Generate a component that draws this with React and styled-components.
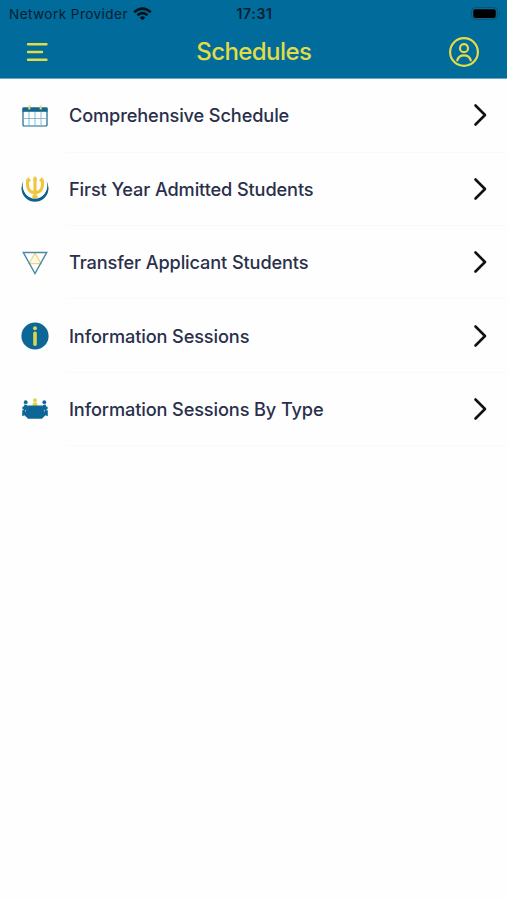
import React from "react";
import styled, { createGlobalStyle } from "styled-components";

const GlobalStyle = createGlobalStyle`
  body {
    margin: 0;
    background: #fefefe;
    font-family: Inter, "Liberation Sans", sans-serif;
  }
`;

const Screen = styled.div`
  width: 507px;
  height: 900px;
  overflow: hidden;
`;

const Header = styled.header`
  height: 79px;
  box-sizing: border-box;
  background: #016b9b;
  border-bottom: 1px solid #65a9c8;
`;

const StatusBar = styled.div`
  display: grid;
  grid-template-columns: 1fr auto 1fr;
  align-items: center;
  height: 27px;
  padding: 0 6px 0 8px;
  color: #04202f;
`;

const Carrier = styled.div`
  display: flex;
  align-items: center;
  gap: 5px;
  padding-left: 1px;
  font-size: 13.5px;
  letter-spacing: 0.47px;
  white-space: nowrap;
`;

const Time = styled.div`
  font-size: 14px;
  font-weight: 600;
  letter-spacing: 0.65px;
`;

const Battery = styled.svg`
  justify-self: end;
`;

const NavBar = styled.div`
  display: grid;
  grid-template-columns: 1fr auto 1fr;
  align-items: center;
  height: 50px;
  padding: 0 27px 0 26px;
  color: #e2dc45;
`;

const Title = styled.h1`
  margin: 0;
  padding-left: 1.5px;
  font-size: 24px;
  line-height: 30px;
  font-weight: 500;
  letter-spacing: -0.58px;
`;

const NavButton = styled.button`
  display: flex;
  justify-self: ${props => props.$side};
  padding: 0;
  border: 0;
  background: none;
  color: inherit;
`;

const List = styled.ul`
  margin: 0;
  padding: 0.3px 0 0;
  list-style: none;
`;

const Row = styled.li`
  display: flex;
  align-items: center;
  height: 73.35px;
  padding-left: 20px;
`;

const RowIcon = styled.svg`
  flex: none;
  width: 30px;
  height: 30px;
`;

const RowBody = styled.div`
  display: flex;
  flex: 1;
  align-items: center;
  justify-content: space-between;
  height: 100%;
  box-sizing: border-box;
  margin-left: 15px;
  padding: 0 19px 0 4px;
  border-bottom: 1px solid #fafafa;
`;

const Label = styled.span`
  color: #2a304b;
  font-size: 18.2px;
  font-weight: 500;
  letter-spacing: -0.13px;
  white-space: nowrap;
`;

const Wifi = () => (
  <svg width="19" height="14" viewBox="0 0 19 14" fill="none" stroke="#04131c" strokeWidth="2.5">
    <path d="M1.2 5.2Q9.5 -2 17.8 5.2" />
    <path d="M4.4 8.3Q9.5 4 14.6 8.3" />
    <path d="M6.7 10.4Q9.5 8.2 12.3 10.4L9.5 13.2Z" fill="#04131c" stroke="none" />
  </svg>
);

const CalendarIcon = () => (
  <RowIcon viewBox="0 0 30 30">
    <rect x="3" y="7" width="24" height="18" rx="1" fill="#fbfeff" stroke="#16678f" strokeWidth="1.2" />
    <path d="M2.5 6.5h25v4.3h-25z" fill="#16678f" />
    <path d="M9 11v14M15 11v14M21 11v14M3 17.5h24" stroke="#83b4ca" strokeWidth="0.9" />
    <path d="M9.3 4.6v4M20.7 4.6v4" stroke="#e2dc68" strokeWidth="2" />
  </RowIcon>
);

const TridentIcon = () => (
  <RowIcon viewBox="0 0 30 30" fill="none">
    <path d="M3.6 7A13.5 13.5 0 1 0 26.4 7A12.3 12.3 0 1 1 3.6 7Z" fill="#0e618a" />
    <circle cx="15" cy="13" r="11.6" fill="#fefefe" />
    <path d="M15 3.5V24M8.2 5C6.4 11 7.4 18.6 15 18.6S23.6 11 21.8 5" stroke="#f2c53e" strokeWidth="3.1" />
    <path d="M12.6 6.5 15 1.8l2.4 4.7zM5.8 8l2.4-5L11.2 7zM18.8 7l3-4 2.4 5zM12.3 21.5h5.4V24.3h-5.4z" fill="#f2c53e" />
  </RowIcon>
);

const TriangleIcon = () => (
  <RowIcon viewBox="0 0 30 30" fill="none">
    <path d="M9 15.7 15 5l6 10.7Z" fill="#fffae6" stroke="#eed68b" strokeWidth="1.3" />
    <path d="M3.3 4.5h23.4L15 25.5Z" stroke="#4e88a3" strokeWidth="1.4" />
  </RowIcon>
);

const InfoIcon = () => (
  <RowIcon viewBox="0 0 30 30">
    <circle cx="15" cy="15" r="13.6" fill="#0c6796" />
    <circle cx="15" cy="7.2" r="2" fill="#d8d653" />
    <path d="M15 12.2v11" stroke="#d8d653" strokeWidth="3.6" strokeLinecap="round" />
  </RowIcon>
);

const MeetingIcon = () => (
  <RowIcon viewBox="0 0 30 30" fill="#0c6796">
    <circle cx="15" cy="6.2" r="2" fill="#ddd84c" />
    <path d="M12.6 12V9.8q0-1.5 2.4-1.5t2.4 1.5V12z" fill="#ddd84c" />
    <path d="M8.5 11.5h13q1 0 1.5 1.2l2.2 7.3q.4 1.4-1 2.4l-1.7 1.8q-.5.5-1.3.5H8.8q-.8 0-1.3-.5l-1.7-1.8q-1.4-1-1-2.4L7 12.7q.5-1.2 1.5-1.2z" />
    <circle cx="5.7" cy="8.2" r="1.9" />
    <circle cx="24.3" cy="8.2" r="1.9" />
    <path d="M4.2 10.5 7.5 11 6.8 15.5 4 17zM25.8 10.5 22.5 11l.7 4.5L26 17z" />
    <circle cx="4" cy="14" r="1.8" />
    <circle cx="26" cy="14" r="1.8" />
    <path d="M2.2 16.2 5 16l1.5 5-4.3 1zM27.8 16.2 25 16l-1.5 5 4.3 1z" />
  </RowIcon>
);

const Chevron = () => (
  <svg width="15" height="24" viewBox="0 0 15 24" fill="none" stroke="#111" strokeWidth="2.6">
    <path d="M2.5 2.5 12 12 2.5 21.5" strokeLinecap="round" strokeLinejoin="round" />
  </svg>
);

const items = [
  { label: "Comprehensive Schedule", Icon: CalendarIcon },
  { label: "First Year Admitted Students", Icon: TridentIcon },
  { label: "Transfer Applicant Students", Icon: TriangleIcon },
  { label: "Information Sessions", Icon: InfoIcon },
  { label: "Information Sessions By Type", Icon: MeetingIcon }
];

export default function App() {
  return (
    <Screen>
      <GlobalStyle />
      <Header>
        <StatusBar>
          <Carrier>
            Network Provider
            <Wifi />
          </Carrier>
          <Time>17:31</Time>
          <Battery width="30" height="14" viewBox="0 0 30 14">
            <rect x="0.5" y="0.5" width="26" height="12" rx="4" fill="none" stroke="#12516f" />
            <rect x="2.3" y="2.2" width="22.4" height="8.8" rx="2" fill="#000" />
            <path d="M28 4.5q2 2 0 4z" fill="#12516f" />
          </Battery>
        </StatusBar>
        <NavBar>
          <NavButton $side="start" aria-label="Menu">
            <svg width="22" height="20" viewBox="0 0 22 20" stroke="currentColor" strokeWidth="2.4" strokeLinecap="round">
              <path d="M2 2.3h18.5M2 10h14M2 17.7h18.5" />
            </svg>
          </NavButton>
          <Title>Schedules</Title>
          <NavButton $side="end" aria-label="Profile">
            <svg width="32" height="32" viewBox="0 0 32 32" fill="none" stroke="currentColor" strokeWidth="2.2">
              <circle cx="16" cy="16" r="13.9" />
              <circle cx="16" cy="12.2" r="4" />
              <path d="M9.2 24.4C10.2 20.8 12.8 19.3 16 19.3s5.8 1.5 6.8 5.1" strokeLinecap="round" />
            </svg>
          </NavButton>
        </NavBar>
      </Header>
      <List>
        {items.map(({ label, Icon }) => (
          <Row key={label}>
            <Icon />
            <RowBody>
              <Label>{label}</Label>
              <Chevron />
            </RowBody>
          </Row>
        ))}
      </List>
    </Screen>
  );
}
